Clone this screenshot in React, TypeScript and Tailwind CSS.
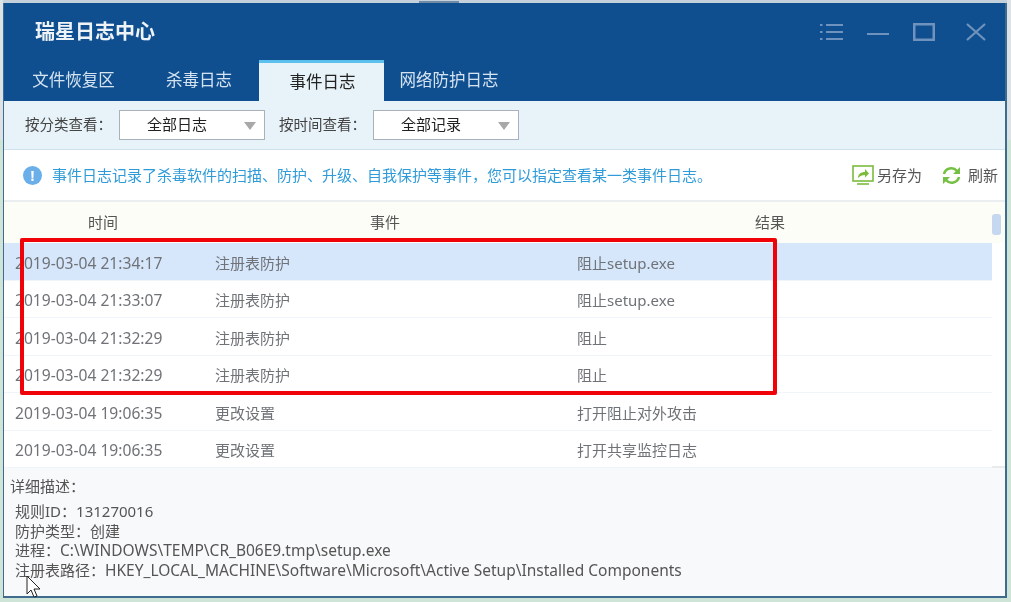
const FONT = "font-['Noto_Sans','Noto_Sans_CJK_SC',sans-serif]";
const COLON = "\uFF1A";
const COMMA = "\uFF0C";

const rows = [
  ["2019-03-04 21:34:17", "注册表防护", "阻止", "setup.exe"],
  ["2019-03-04 21:33:07", "注册表防护", "阻止", "setup.exe"],
  ["2019-03-04 21:32:29", "注册表防护", "阻止", ""],
  ["2019-03-04 21:32:29", "注册表防护", "阻止", ""],
  ["2019-03-04 19:06:35", "更改设置", "打开阻止对外攻击", ""],
  ["2019-03-04 19:06:35", "更改设置", "打开共享监控日志", ""],
];

function Select({ label }: { label: string }) {
  return (
    <div className="relative flex h-[30px] w-[146px] items-center border border-[#a9b2ba] bg-white pl-[27px] text-[15px] text-[#222]">
      {label}
      <svg className="absolute right-[7px] top-[11px]" width="14" height="8" viewBox="0 0 14 8">
        <path d="M1 0h12l-6 8z" fill="#a8a8a8" />
      </svg>
    </div>
  );
}

function Tab({ label, w, active }: { label: string; w: string; active?: boolean }) {
  return (
    <div
      className={`flex h-[41px] items-center justify-center text-[16.5px] ${w} ${
        active ? "border-t-[3px] border-[#5cc0ee] bg-[#e8f3f9] pl-[2px] text-[#222]" : "text-[#d5e3f0]"
      }`}
    >
      {label}
    </div>
  );
}

export default function App() {
  return (
    <div className={`relative h-[602px] w-[1011px] overflow-hidden bg-[linear-gradient(to_bottom,#dde2e6_0,#dde2e6_140px,#cde4d6_140px)] pb-[4px] pl-[3px] pr-[4px] pt-[3px] blur-[0.35px] ${FONT}`}>
      {/* edge of the window behind */}
      <div className="absolute left-[3px] right-[4px] top-0 h-[3px] bg-[#c4d0da]" />
      <div className="absolute left-[419px] top-[1px] h-[2px] w-[40px] bg-[#6f8ba5]" />

      <div className="flex h-[595px] w-[1004px] flex-col border-b-2 border-l border-r-2 border-[#3f6c8e] bg-white">
        {/* title bar */}
        <div className="h-[98px] shrink-0 bg-[#0f4f90]">
          <div className="flex h-[57px] items-center justify-between pl-[31px] pr-[19px]">
            <span className="text-[20px] font-bold text-[#eef3f8]">瑞星日志中心</span>
            <div className="flex items-center">
              <svg width="23" height="18" viewBox="0 0 23 18" fill="none" stroke="#6f93bd" strokeWidth="2">
                <path d="M0 2h2.500M6 2h17M0 9h2.500M6 9h17M0 16h2.500M6 16h17" />
              </svg>
              <svg className="ml-[24px]" width="22" height="20" viewBox="0 0 22 20" fill="none" stroke="#6f93bd" strokeWidth="2">
                <path d="M0 12h22" />
              </svg>
              <svg className="ml-[24px]" width="22" height="18" viewBox="0 0 22 18" fill="none" stroke="#6f93bd" strokeWidth="2.500">
                <rect x="1.250" y="1.250" width="19.500" height="15.500" />
              </svg>
              <svg className="ml-[31px]" width="20" height="18" viewBox="0 0 20 18" fill="none" stroke="#6f93bd" strokeWidth="2.200">
                <path d="M1 1l18 16M19 1L1 17" />
              </svg>
            </div>
          </div>
          <div className="flex pl-[5px]">
            <Tab label="文件恢复区" w="w-[125px] pl-[4px]" />
            <Tab label="杀毒日志" w="w-[125px] pl-[5px]" />
            <Tab label="事件日志" w="w-[125px]" active />
            <Tab label="网络防护日志" w="w-[130px]" />
          </div>
        </div>

        {/* toolbar */}
        <div className="flex h-[49px] shrink-0 items-center border-b border-[#cfe2ef] bg-[#e8f3f9] pb-[1px] pl-[21px] text-[14.5px] text-[#444]">
          <span className="w-[94px]">按分类查看{COLON}</span>
          <Select label="全部日志" />
          <span className="ml-[14px] w-[94px]">按时间查看{COLON}</span>
          <Select label="全部记录" />
        </div>

        {/* info row */}
        <div className="flex h-[52px] shrink-0 items-center border-b-2 border-[#ebeef0] bg-white pl-[19px] text-[15px]">
          <div className="flex h-[19px] w-[19px] items-center justify-center rounded-full bg-[#6aaeea] text-[14px] font-bold text-white">!</div>
          <span className="ml-[10px] w-[652px] whitespace-nowrap text-[#2f9bd8]">
            事件日志记录了杀毒软件的扫描、防护、升级、自我保护等事件{COMMA}您可以指定查看某一类事件日志。
          </span>
          <svg className="ml-[148px]" width="22" height="20" viewBox="0 0 22 20" fill="none" stroke="#7cbb3c" strokeWidth="1.600">
            <rect x="1" y="1" width="20" height="15" />
            <path d="M5 19h12" />
            <path d="M6 13c0-4 3-6 7-6V4l4 4.500-4 4V10c-3 0-5 1-7 3z" fill="#7cbb3c" stroke="none" />
          </svg>
          <span className="ml-[3px] text-[#555]">另存为</span>
          <svg className="ml-[20px]" width="19" height="19" viewBox="0 0 19 19" fill="none" stroke="#74c043" strokeWidth="2.600">
            <path d="M2 8a7.500 7.500 0 0 1 13-3" />
            <path d="M17 11a7.500 7.500 0 0 1-13 3" />
            <path d="M18 1v7h-7zM1 18v-7h7z" fill="#74c043" stroke="none" />
          </svg>
          <span className="ml-[7px] text-[#555]">刷新</span>
        </div>

        {/* table */}
        <div className="relative h-[264px] shrink-0 text-[15px] text-[#6f7377]">
          <div className="grid h-[41px] grid-cols-[200px_362px_1fr] items-center bg-[#fdfdf7] pr-[13px] text-[#555]">
            <span className="pl-[84px]">时间</span>
            <span className="pl-[166px]">事件</span>
            <span className="pl-[189px]">结果</span>
          </div>
          {rows.map((r, i) => (
            <div
              key={i}
              className={`mr-[13px] grid h-[37.5px] grid-cols-[200px_362px_1fr] items-center border-b border-[#f0f5fb] pl-[11px] pt-[3px] ${
                i === 0 ? "bg-[#d6e6fb]" : "bg-white"
              }`}
            >
              <span className="whitespace-nowrap pt-[1px] text-[15.6px]">{r[0]}</span>
              <span>{r[1]}</span>
              <span>
                {r[2]}
                <span className="text-[15px]">{r[3]}</span>
              </span>
            </div>
          ))}
          <div className="absolute right-[4px] top-[12px] h-[21px] w-[9px] rounded-[3px] bg-[#c5d8ef]" />
        </div>

        {/* detail */}
        <div className="min-h-0 flex-1 border-t-2 border-[#e9ebeb] bg-[#f8f9fa] pl-[6px] pt-[7px] text-[15px] text-[#555]">
          <div className="leading-[22px]">详细描述{COLON}</div>
          <div className="mt-[5px] pl-[5px] leading-[19.5px]">
            <div>规则ID{COLON}131270016</div>
            <div>防护类型{COLON}创建</div>
            <div>进程{COLON}<span className="text-[15.5px]">C:\WINDOWS\TEMP\CR_B06E9.tmp\setup.exe</span></div>
            <div>注册表路径{COLON}<span className="text-[15.5px]">HKEY_LOCAL_MACHINE\Software\Microsoft\Active Setup\Installed Components</span></div>
          </div>
        </div>
      </div>

      {/* annotation */}
      <div className="absolute left-[20px] top-[238px] h-[157px] w-[757px] rounded-[2px] border-[4px] border-[#f00308]" />
      {/* cursor */}
      <svg className="absolute left-[26px] top-[575px]" width="16" height="24" viewBox="0 0 16 24">
        <path d="M1 1v18l4-4 3 7 3-1-3-7h6z" fill="#fff" stroke="#222" strokeWidth="1" />
      </svg>
    </div>
  );
}
